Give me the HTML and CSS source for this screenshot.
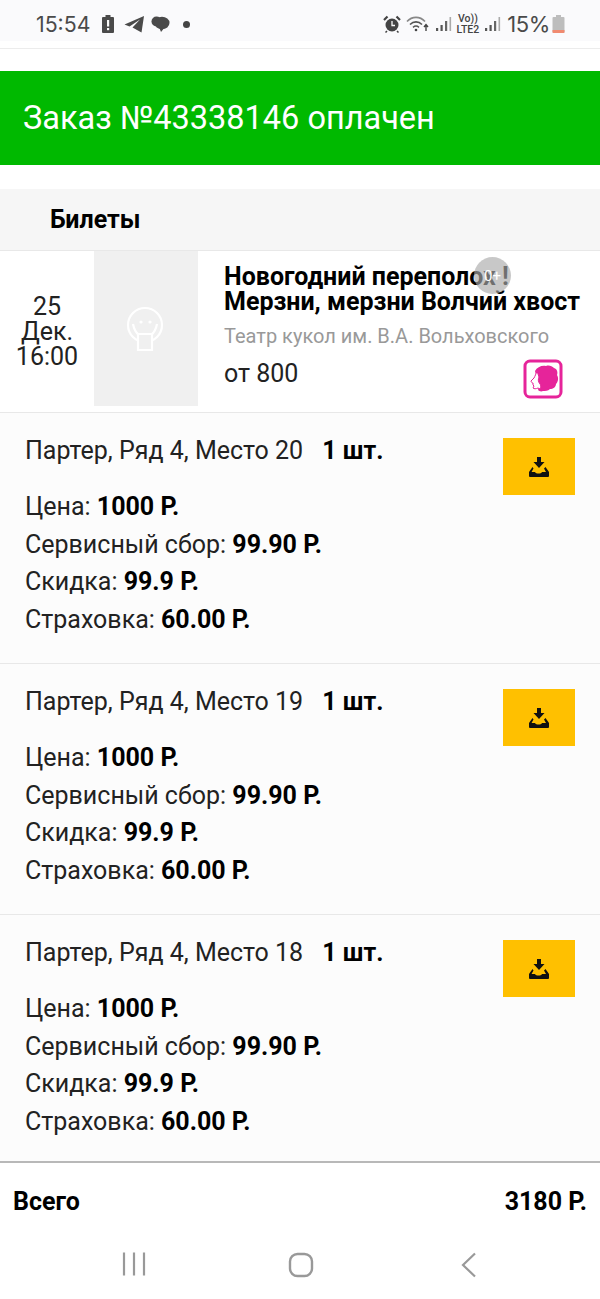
FILE: index.html
```html
<!DOCTYPE html>
<html lang="ru">
<head>
<meta charset="utf-8">
<title>Заказ</title>
<link rel="stylesheet" href="styles.css">
</head>
<body>
<div class="phone">
  <div class="status">
    <div class="status-left">
      <span class="clock">15:54</span>
      <svg class="i-alert" width="14" height="20" viewBox="0 0 14 20"><path d="M4.500 1h5v2H12a1 1 0 0 1 1 1v14a1 1 0 0 1-1 1H2a1 1 0 0 1-1-1V4a1 1 0 0 1 1-1h2.500z" fill="#4a4a4a"/><rect x="6" y="6" width="2.200" height="6.500" fill="#fafafa"/><rect x="6" y="14" width="2.200" height="2.200" fill="#fafafa"/></svg>
      <svg class="i-tg" width="21" height="18" viewBox="0 0 21 18"><path d="M20 1 0.500 9.500 5.500 11.500 16 4.500 8.500 12.500 17.500 17.500z" fill="#4a4a4a"/></svg>
      <svg class="i-msg" width="19" height="18" viewBox="0 0 19 18"><circle cx="5.500" cy="6.500" r="5" fill="#4a4a4a"/><ellipse cx="11" cy="8" rx="7.500" ry="6.200" fill="#4a4a4a"/><path d="M8 12h6l-4 5z" fill="#4a4a4a"/></svg>
      <span class="dot"></span>
    </div>
    <div class="status-right">
      <svg width="18" height="18" viewBox="0 0 18 18"><circle cx="9" cy="10" r="6.500" fill="#444"/><path d="M1 5 4.500 1.500M17 5 13.500 1.500" stroke="#444" stroke-width="2.200"/><path d="M9 6v4.500h3" stroke="#fafafa" stroke-width="1.300" fill="none"/><path d="M4 16l-1.500 1.500M14 16l1.500 1.500" stroke="#444" stroke-width="1.500"/></svg>
      <svg class="i-wifi" width="24" height="18" viewBox="0 0 24 18" fill="none"><path d="M1 6.500C6 1 14 1 19 6.500" stroke="#888" stroke-width="1.600"/><path d="M4 9.500C7.500 6 12.500 6 16 9.500" stroke="#555" stroke-width="1.600"/><path d="M7 12.300c2-1.600 4-1.600 6 0" stroke="#555" stroke-width="1.500"/><circle cx="10" cy="15" r="1.300" fill="#444"/><path d="M20 16V10M18 12l2-2.500 2 2.500" stroke="#444" stroke-width="1.400"/></svg>
      <svg class="i-sig" width="16" height="18" viewBox="0 0 16 18"><rect x="0" y="13" width="2.200" height="3" fill="#555"/><rect x="4.500" y="10" width="2.200" height="6" fill="#555"/><rect x="9" y="6" width="2.200" height="10" fill="#666"/><rect x="13.500" y="2" width="1.600" height="14" fill="#aaa"/></svg>
      <span class="volte">Vo))<br>LTE2</span>
      <svg class="i-sig" width="16" height="18" viewBox="0 0 16 18"><rect x="0" y="13" width="2.200" height="3" fill="#555"/><rect x="4.500" y="10" width="2.200" height="6" fill="#555"/><rect x="9" y="6" width="2.200" height="10" fill="#666"/><rect x="13.500" y="2" width="1.600" height="14" fill="#aaa"/></svg>
      <span class="pct">15%</span>
      <svg class="i-batt" width="13" height="20" viewBox="0 0 13 20"><path d="M4 1h5v2h2.500a1 1 0 0 1 1 1v14a1 1 0 0 1-1 1H1.500a1 1 0 0 1-1-1V4a1 1 0 0 1 1-1H4z" fill="#bdbdbd"/><path d="M.5 16h12v2a1 1 0 0 1-1 1H1.500a1 1 0 0 1-1-1z" fill="#f08a70"/></svg>
    </div>
  </div>
  <div class="topbar"></div>
  <div class="banner">Заказ №43338146 оплачен</div>
  <div class="section-head">Билеты</div>
  <div class="event">
    <div class="event-date">25<br>Дек.<br>16:00</div>
    <div class="poster">
      <svg width="40" height="46" viewBox="0 0 40 46" fill="none" stroke="#fff" stroke-width="2.200"><circle cx="19" cy="19" r="17"/><circle cx="15" cy="16" r="1.600" fill="#fff" stroke="none"/><circle cx="24" cy="16" r="1.600" fill="#fff" stroke="none"/><path d="M7 18c1 5 3 9 6 11M31 18c-1 5-3 9-6 11"/><path d="M12 28h14v16H12z" fill="#f0f0f0"/></svg>
    </div>
    <div class="event-info">
      <div class="event-title">Новогодний переполох !<br>Мерзни, мерзни Волчий хвост</div>
      <div class="event-venue">Театр кукол им. В.А. Вольховского</div>
      <div class="event-price">от 800</div>
      <span class="age">0+</span>
      <svg class="logo" width="40" height="40" viewBox="0 0 40 40"><rect x="2" y="2" width="36" height="36" rx="5" fill="#fff" stroke="#e6249a" stroke-width="3"/><path d="M12 12c2-4 7-6 11-5 3-1 6 0 8 2 3 1 4 4 3 7 2 3 1 7-1 9 0 3-3 5-6 5-2 2-5 2-7 2-2 1-4 0-5-1l1-3z" fill="#e6249a"/><path d="M14 12c-1 3-2 5-3 7l-3 3c0 1 1 2 2 2v2l1 1-1 2c1 1 3 1 5 0l2 1c1-2 1-4 0-5-2-2-2-5-1-7-1-2-1-4-2-6z" fill="#fff" stroke="#e6249a" stroke-width="1" stroke-linejoin="round"/></svg>
    </div>
  </div>
  <div class="ticket">
    <div class="ticket-body">
      <div class="ticket-place">Партер, Ряд 4, Место 20<b>1 шт.</b></div>
      <div class="ticket-lines">
        <div>Цена: <b>1000 Р.</b></div>
        <div>Сервисный сбор: <b>99.90 Р.</b></div>
        <div>Скидка: <b>99.9 Р.</b></div>
        <div>Страховка: <b>60.00 Р.</b></div>
      </div>
    </div>
    <div class="dl"><svg width="20" height="20" viewBox="0 0 20 20"><path d="M8 0h4v5h3.500L10 11 4.500 5H8z" fill="#111"/><path d="M3.500 10 0 15v4a1 1 0 0 0 1 1h18a1 1 0 0 0 1-1v-4l-3.500-5-1.500 1.500 2 3.500h-4c-1 2-6 2-7 0H2.500l2-3.500z" fill="#111"/></svg></div>
  </div>
  <div class="ticket">
    <div class="ticket-body">
      <div class="ticket-place">Партер, Ряд 4, Место 19<b>1 шт.</b></div>
      <div class="ticket-lines">
        <div>Цена: <b>1000 Р.</b></div>
        <div>Сервисный сбор: <b>99.90 Р.</b></div>
        <div>Скидка: <b>99.9 Р.</b></div>
        <div>Страховка: <b>60.00 Р.</b></div>
      </div>
    </div>
    <div class="dl"><svg width="20" height="20" viewBox="0 0 20 20"><path d="M8 0h4v5h3.500L10 11 4.500 5H8z" fill="#111"/><path d="M3.500 10 0 15v4a1 1 0 0 0 1 1h18a1 1 0 0 0 1-1v-4l-3.500-5-1.500 1.500 2 3.500h-4c-1 2-6 2-7 0H2.500l2-3.500z" fill="#111"/></svg></div>
  </div>
  <div class="ticket last">
    <div class="ticket-body">
      <div class="ticket-place">Партер, Ряд 4, Место 18<b>1 шт.</b></div>
      <div class="ticket-lines">
        <div>Цена: <b>1000 Р.</b></div>
        <div>Сервисный сбор: <b>99.90 Р.</b></div>
        <div>Скидка: <b>99.9 Р.</b></div>
        <div>Страховка: <b>60.00 Р.</b></div>
      </div>
    </div>
    <div class="dl"><svg width="20" height="20" viewBox="0 0 20 20"><path d="M8 0h4v5h3.500L10 11 4.500 5H8z" fill="#111"/><path d="M3.500 10 0 15v4a1 1 0 0 0 1 1h18a1 1 0 0 0 1-1v-4l-3.500-5-1.500 1.500 2 3.500h-4c-1 2-6 2-7 0H2.500l2-3.500z" fill="#111"/></svg></div>
  </div>
  <div class="total"><span>Всего</span><span>3180 Р.</span></div>
  <div class="navbar">
    <svg width="24" height="24" viewBox="0 0 24 24"><path d="M2 .5v23M12 .5v23M22 .5v23" stroke="#999" stroke-width="2.200"/></svg>
    <svg width="26" height="26" viewBox="0 0 26 26"><rect x="2" y="2" width="22" height="22" rx="7.500" fill="none" stroke="#999" stroke-width="2.400"/></svg>
    <svg class="nav-back" width="16" height="26" viewBox="0 0 16 26"><path d="M14 1.500 2 13l12 11.500" fill="none" stroke="#999" stroke-width="2.200"/></svg>
  </div>
</div>
</body>
</html>
```
FILE: styles.css
```css
* { box-sizing: border-box; }
html, body { margin: 0; padding: 0; background: #fff; }
body { font-family: Roboto, "Liberation Sans", sans-serif; color: #111; }
.phone { width: 600px; height: 1299px; display: flex; flex-direction: column; overflow: hidden; }

.status { height: 41px; background: #fafafc; display: flex; justify-content: space-between; align-items: center; padding: 7px 35px 0 36px; }
.status-left, .status-right { display: flex; align-items: center; }
.clock { font-family: Inter, Roboto, sans-serif; font-size: 21.300px; color: #4a4a4a; margin-right: 11px; }
.i-tg { margin-left: 9px; }
.i-msg { margin-left: 6px; }
.dot { width: 7px; height: 7px; border-radius: 50%; background: #444; margin-left: 13px; }
.status-right { gap: 3px; }
.status-right .i-sig { margin-left: 3px; }
.i-wifi { margin-left: 2px; }
.volte { font-size: 10.500px; line-height: 11px; font-weight: 500; color: #444; text-align: center; margin-left: 2px; }
.pct { font-family: Inter, Roboto, sans-serif; font-size: 22px; color: #4a4a4a; margin-left: 3px; letter-spacing: -.4px; }
.i-batt { margin-left: -1px; }

.topbar { height: 8px; background: #fff; border-bottom: 1px solid #ececec; }
.banner { margin-top: 22px; height: 94px; background: #00b900; color: #fff; font-size: 32.500px; display: flex; align-items: center; padding-left: 23px; }
.section-head { margin-top: 24px; height: 61px; background: #f6f6f6; font-size: 25px; font-weight: 700; color: #000; display: flex; align-items: center; padding-left: 50px; }

.event { height: 163px; background: #fff; display: flex; border-top: 1px solid #e8e8e8; border-bottom: 1px solid #e8e8e8; }
.event-date { width: 94px; text-align: center; font-size: 25px; line-height: 25px; align-self: center; color: #222; }
.poster { width: 104px; height: 155px; background: #f0f0f0; display: flex; align-items: center; justify-content: center; }
.event-info { position: relative; flex: 1; padding: 13px 0 0 26px; }
.event-title { font-size: 25px; font-weight: 700; line-height: 25px; white-space: nowrap; color: #000; }
.event-venue { font-size: 20px; color: #999; margin-top: 9px; line-height: 26px; white-space: nowrap; }
.event-price { font-size: 25px; margin-top: 11px; line-height: 28px; color: #222; }
.age { position: absolute; left: 276px; top: 6px; width: 37px; height: 37px; border-radius: 50%; background: rgba(170,170,170,.65); color: #fff; font-size: 15px; display: flex; align-items: center; justify-content: center; }
.logo { position: absolute; left: 325px; top: 108px; }

.ticket { height: 251px; background: #fcfcfc; border-bottom: 1px solid #e8e8e8; display: flex; justify-content: space-between; padding: 25px 25px 0 25px; }
.ticket.last { height: 248px; border-bottom: 2px solid #b8b8b8; }
.ticket-place { font-size: 25px; line-height: 26px; color: #222; white-space: nowrap; }
.ticket-place b { margin-left: 19px; color: #000; }
.ticket-lines { margin-top: 24px; font-size: 25px; line-height: 37.500px; color: #222; }
.ticket-lines b { color: #000; }
.dl { width: 72px; height: 57px; background: #ffc000; display: flex; align-items: center; justify-content: center; }
.ticket-body { min-width: 0; }

.total { height: 76px; background: #fff; display: flex; justify-content: space-between; align-items: center; padding: 0 13px; font-size: 25px; font-weight: 700; color: #000; }
.navbar { flex: 1; background: #fff; display: flex; align-items: flex-start; padding: 13px 0 0 122px; gap: 142px; }
.nav-back { margin-left: 5px; }
```
